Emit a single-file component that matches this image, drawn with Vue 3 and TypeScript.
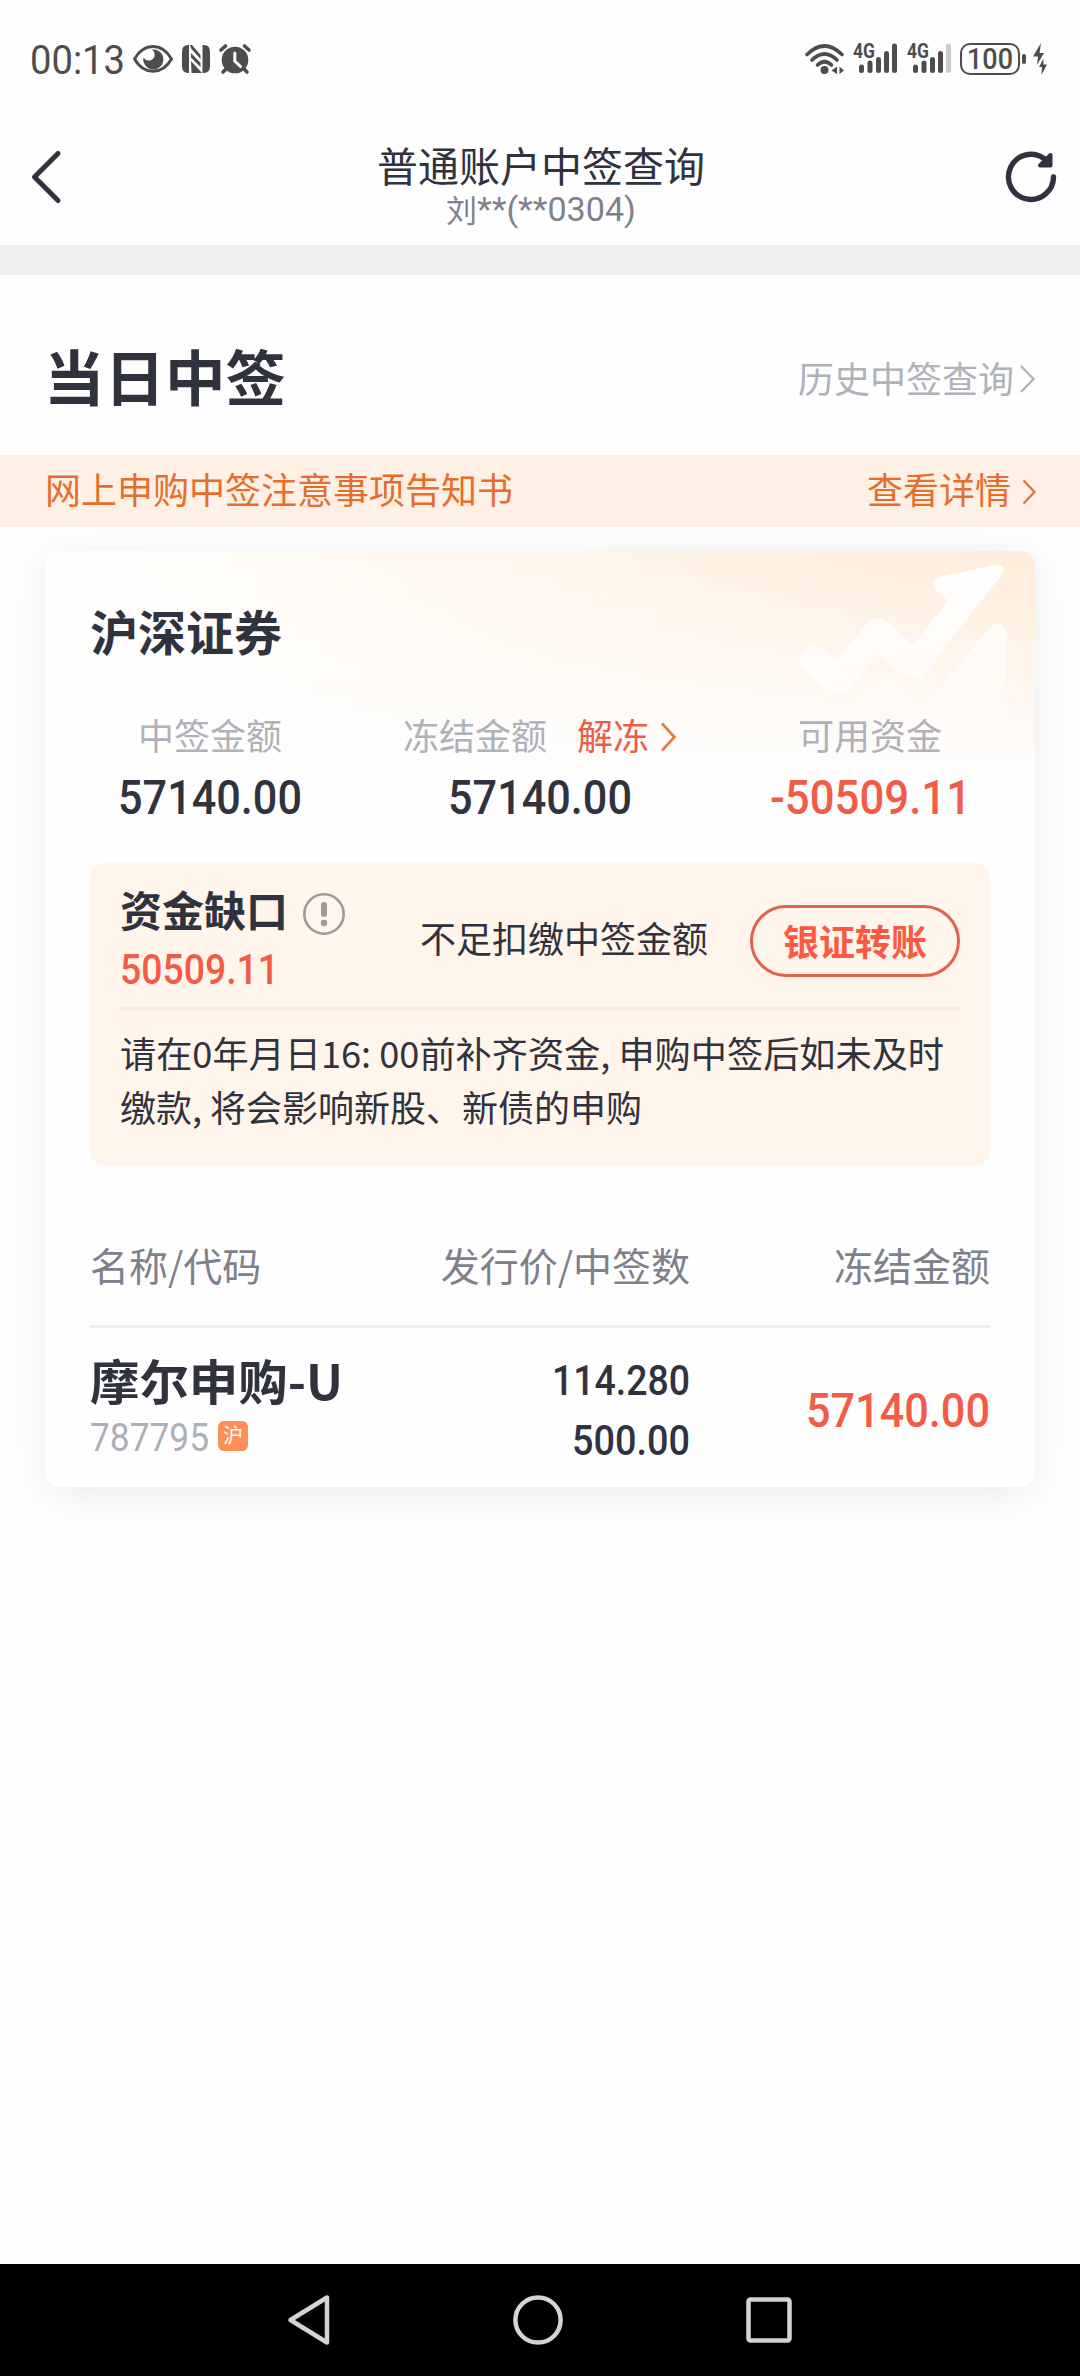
<script setup lang="ts">
import type { Directive } from 'vue'

interface Holding {
  name: string
  nameWidth: number
  code: string
  market: string
  price: string
  count: string
  frozen: string
}

const noticeLines = [
  { text: '请在0年月日16: 00前补齐资金, 申购中签后如未及时', width: 824 },
  { text: '缴款, 将会影响新股、新债的申购', width: 522 },
]

const holdings: Holding[] = [
  {
    name: '摩尔申购-U',
    nameWidth: 253,
    code: '787795',
    market: '沪',
    price: '114.280',
    count: '500.00',
    frozen: '57140.00',
  },
]

// Condenses or widens a run of text to an exact advance width.
const vFit: Directive<HTMLElement, number> = {
  mounted(el, { value }) {
    const natural = el.getBoundingClientRect().width
    if (!natural) return
    el.style.transform = `scaleX(${value / natural})`
    el.style.marginRight = `${value - natural}px`
  },
}
</script>

<template>
  <div class="screen">
    <div class="status">
      <div class="status-left">
        <span v-fit="95" class="fit clock">00:13</span>
        <svg class="ic-eye" width="42" height="30" viewBox="0 0 42 30">
          <path d="M2.5 15C7 7 14 2.5 21 2.5S35 7 39.5 15C35 23 28 27.200 21 27.200S7 23 2.500 15Z" fill="none" stroke="#4d4d4d" stroke-width="3" stroke-linejoin="round" />
          <path d="M20 5.500A10 10 0 1 1 11.500 13.500A6 6 0 1 0 20 5.500Z" fill="#4d4d4d" />
        </svg>
        <svg class="ic-nfc" width="28" height="28" viewBox="0 0 28 28">
          <path d="M6 0H7V28H6Q0 28 0 21V7Q0 0 6 0ZM22 0Q28 0 28 7V21Q28 28 22 28H20.500V0Z" fill="#4d4d4d" />
          <path d="M8 0H10L18.500 10V14L9.500 4ZM9 8L18.500 18V22L9 12.500ZM9 16L20 28H9.500Z" fill="#4d4d4d" />
        </svg>
        <svg class="ic-alarm" width="32" height="30" viewBox="0 0 32 30">
          <circle cx="16" cy="16" r="13.300" fill="#4d4d4d" />
          <path d="M2 6L6.500 2M30 6L25.500 2M7 25L4 28M25 25L28 28" stroke="#4d4d4d" stroke-width="3.600" stroke-linecap="round" />
          <path d="M15.800 9V17L21.500 22.500" fill="none" stroke="#fefefe" stroke-width="3" stroke-linecap="round" />
        </svg>
      </div>
      <div class="status-right">
        <svg width="40" height="32" viewBox="0 0 40 32">
          <g fill="none" stroke="#4d4d4d" stroke-width="3.600" stroke-linecap="round">
            <path d="M2 11.500Q19.500 -5.500 37 11.500" />
            <path d="M7 17Q19.500 5 32 17" />
            <path d="M12.500 22Q19.500 15.500 26.500 22" />
          </g>
          <circle cx="19.500" cy="27" r="4" fill="#4d4d4d" />
          <path d="M26.500 27.500L32 23.500V31ZM39 27.500L34.500 23.500V31Z" fill="#4d4d4d" />
        </svg>
        <svg v-for="n in 2" :key="n" class="ic-signal" width="46" height="32" viewBox="0 0 46 32">
          <text x="0" y="15" font-size="19.500" font-weight="700" textLength="22" lengthAdjust="spacingAndGlyphs" fill="#4d4d4d">4G</text>
          <g stroke="#4d4d4d" stroke-width="5" stroke-linecap="round">
            <path d="M8.500 24V27.500M17 20V27.500M25.500 16.500V27.500M33.500 10.500V27.500" />
            <path :stroke="n === 2 ? '#cccccc' : '#4d4d4d'" d="M41.500 3V27.500" />
          </g>
        </svg>
        <div class="battery"><span v-fit="46" class="fit">100</span></div>
        <i class="nub"></i>
        <svg class="ic-bolt" width="14" height="33" viewBox="0 0 14 33">
          <path d="M8 0L0 13.500H5L4 22L11 10H6.500ZM10.500 15.500L6 24H9L8.500 32L14 21.500H10.500Z" fill="#4d4d4d" />
        </svg>
      </div>
    </div>

    <header class="nav">
      <svg class="back" width="32" height="54" viewBox="0 0 32 54">
        <path d="M28 3.500L4.500 27L28 50.500" fill="none" stroke="#30323d" stroke-width="5" stroke-linecap="round" stroke-linejoin="round" />
      </svg>
      <div class="titles">
        <div class="title">普通账户中签查询</div>
        <div class="subtitle"><span class="cjk">刘</span><span v-fit="159" class="fit">**(**0304)</span></div>
      </div>
      <svg class="refresh" width="54" height="54" viewBox="0 0 54 54">
        <path d="M49.500 27A22.500 22.500 0 1 1 40 8.500" fill="none" stroke="#30323d" stroke-width="5.400" stroke-linecap="round" />
        <path d="M46.500 5V15.500H36Z" fill="#30323d" stroke="#30323d" stroke-width="4" stroke-linejoin="round" />
      </svg>
    </header>
    <div class="gap"></div>

    <section class="heading">
      <h1>当日中签</h1>
      <div class="history">
        历史中签查询
        <svg width="17" height="30" viewBox="0 0 17 30"><path d="M2 2L14.500 15L2 28" fill="none" stroke="#b0b1b9" stroke-width="2.200" /></svg>
      </div>
    </section>

    <div class="banner">
      <span>网上申购中签注意事项告知书</span>
      <span class="detail">
        查看详情
        <svg width="15" height="26" viewBox="0 0 15 26"><path d="M1.500 1.500L12.500 13L1.500 24.500" fill="none" stroke="#e07035" stroke-width="2.200" /></svg>
      </span>
    </div>

    <main class="card">
      <svg class="mark" width="210" height="160" viewBox="0 0 210 160">
        <defs>
          <linearGradient id="line" x1="0" y1="0" x2="0" y2="1">
            <stop offset="0" stop-color="#fff" />
            <stop offset=".3" stop-color="#fff" stop-opacity=".85" />
            <stop offset="1" stop-color="#fff" stop-opacity=".5" />
          </linearGradient>
          <linearGradient id="area" x1="0" y1="0" x2="0" y2="1">
            <stop offset="0" stop-color="#fff" stop-opacity=".75" />
            <stop offset="1" stop-color="#fff" stop-opacity=".15" />
          </linearGradient>
        </defs>
        <path d="M138 12L196 0Q206 0 203 8L126 107Q116 119 103 110L78 88L51 122Q41 134 30 127L4 105Q-5 95 4 86Q13 78 24 84L37 95L64 62Q75 48 89 58L113 80L148 36L136 25Q131 16 138 12Z" fill="url(#line)" />
        <path d="M2 130L20 141Q42 149 55 140L79 116Q85 110 93 116L124 142L188 64Q195 56 202 60Q206 63 206 68V150H2Z" fill="url(#area)" />
      </svg>

      <h2>沪深证券</h2>
      <div class="stats">
        <div class="stat">
          <div class="label">中签金额</div>
          <div class="value"><span v-fit="184" class="fit">57140.00</span></div>
        </div>
        <div class="stat">
          <div class="label">
            冻结金额<span class="unfreeze">解冻</span>
            <svg width="17" height="30" viewBox="0 0 17 30"><path d="M2 1.500L14.500 15L2 28.500" fill="none" stroke="#e07c3c" stroke-width="2.600" /></svg>
          </div>
          <div class="value"><span v-fit="184" class="fit">57140.00</span></div>
        </div>
        <div class="stat">
          <div class="label">可用资金</div>
          <div class="value red"><span v-fit="201" class="fit">-50509.11</span></div>
        </div>
      </div>

      <section class="shortfall">
        <div class="short-top">
          <div class="short-left">
            <div class="short-title">
              资金缺口
              <svg width="42" height="42" viewBox="0 0 42 42">
                <circle cx="21" cy="21" r="19.700" fill="none" stroke="#9d9b98" stroke-width="2.600" />
                <path d="M21 12V21" stroke="#9d9b98" stroke-width="6" stroke-linecap="round" />
                <circle cx="21" cy="30" r="3.200" fill="#9d9b98" />
              </svg>
            </div>
            <div class="short-value"><span v-fit="159" class="fit">50509.11</span></div>
          </div>
          <div class="short-note">不足扣缴中签金额</div>
          <button class="transfer">银证转账</button>
        </div>
        <div class="notice">
          <div v-for="line in noticeLines" :key="line.text"><span v-fit="line.width" class="fit">{{ line.text }}</span></div>
        </div>
      </section>

      <div class="row table-head">
        <div>名称/代码</div>
        <div class="right">发行价/中签数</div>
        <div class="right">冻结金额</div>
      </div>
      <div v-for="h in holdings" :key="h.code" class="row item">
        <div>
          <div class="name"><span v-fit="h.nameWidth" class="fit">{{ h.name }}</span></div>
          <div class="code"><span v-fit="119" class="fit">{{ h.code }}</span><span class="badge">{{ h.market }}</span></div>
        </div>
        <div class="right nums">
          <div><span v-fit="138" class="fit">{{ h.price }}</span></div>
          <div><span v-fit="118" class="fit">{{ h.count }}</span></div>
        </div>
        <div class="right frozen value red"><span v-fit="184" class="fit">{{ h.frozen }}</span></div>
      </div>
    </main>

    <footer class="sysbar">
      <svg width="46" height="54" viewBox="0 0 46 54"><path d="M41 4.500V49.500L4.500 27Z" fill="none" stroke="#d4d4d4" stroke-width="4.500" stroke-linejoin="round" /></svg>
      <svg width="54" height="54" viewBox="0 0 54 54"><circle cx="27" cy="27" r="22.600" fill="none" stroke="#d4d4d4" stroke-width="4.500" /></svg>
      <svg width="50" height="50" viewBox="0 0 50 50"><rect x="4.500" y="4.500" width="41" height="41" rx="2" fill="none" stroke="#d4d4d4" stroke-width="4.500" /></svg>
    </footer>
  </div>
</template>

<style>
body { margin: 0; background: #fefefe; }
</style>

<style scoped>
.screen {
  width: 1080px; height: 2376px; display: flex; flex-direction: column; overflow: hidden;
  background: #fefefe; color: #30323d; font-family: "Noto Sans CJK SC", sans-serif;
}
svg { display: block; flex: none; overflow: visible; }
svg text { font-family: Roboto, sans-serif; }
h1, h2 { margin: 0; }
.fit { display: inline-block; transform-origin: 0 50%; white-space: nowrap; }

.status { height: 120px; display: flex; justify-content: space-between; color: #4d4d4d; font-family: Roboto, sans-serif; }
.status-left, .status-right { display: flex; align-items: center; height: 118px; }
.status-left { padding-left: 30px; }
.clock { font-size: 41px; line-height: 60px; padding-top: 2px; }
.ic-eye { margin-left: 7px; }
.ic-nfc { margin-left: 8px; }
.ic-alarm { margin-left: 9px; }
.status-right { padding-right: 33px; }
.ic-signal { margin-left: 8px; }
.battery {
  box-sizing: border-box; width: 60px; height: 32px; margin-left: 7px; border: 2.500px solid #4d4d4d; border-radius: 10px;
  display: flex; align-items: center; justify-content: center; font-size: 29px; line-height: 28px; font-weight: 500;
}
.nub { width: 4px; height: 10px; margin-left: 2px; border-radius: 2px; background: #4d4d4d; }
.ic-bolt { margin-left: 7px; }

.nav { height: 125px; display: flex; justify-content: space-between; }
.back { margin: 30px 0 0 30px; }
.titles { display: flex; flex-direction: column; align-items: center; padding: 20px 0 0 16px; }
.title { font-size: 41px; line-height: 48px; }
.subtitle { display: flex; font-family: Roboto, sans-serif; font-size: 34px; line-height: 42px; height: 42px; color: #7f818a; }
.cjk { font-family: "Noto Sans CJK SC", sans-serif; font-size: 31px; }
.refresh { margin: 30px 22px 0 0; }
.gap { height: 30px; background: #efefef; }

.heading { height: 180px; display: flex; justify-content: space-between; align-items: center; padding: 0 44px; }
h1 { font-size: 60.500px; line-height: 80px; font-weight: 700; margin-top: 19px; }
.history { display: flex; align-items: center; gap: 5px; font-size: 36px; line-height: 50px; color: #b0b1b9; margin-top: 23px; }
.history svg { margin-top: 4px; }
.banner {
  height: 72px; display: flex; justify-content: space-between; align-items: center; padding: 0 43px 6px 45px;
  box-sizing: border-box; background: #fff0e6; color: #e56e2c; font-size: 36px; line-height: 50px;
}
.detail { display: flex; align-items: center; gap: 11px; }
.detail svg { margin-top: 7px; }

.card {
  position: relative; box-sizing: border-box; height: 936px; margin: 24px 45px 0; padding: 0 45px; border-radius: 15px;
  background:
    linear-gradient(180deg, rgba(254, 254, 254, 0) 0, #fefefe 230px),
    linear-gradient(90deg, #fefefe 0, #fffcf8 20%, #fff5ea 50%, #ffecd9 100%);
  box-shadow: 0 6px 40px rgba(0, 0, 0, .08);
}
.mark { position: absolute; left: 755px; top: 14px; }
h2 { position: relative; font-size: 48px; line-height: 60px; font-weight: 700; padding-top: 49px; }
.stats { position: relative; display: flex; margin: 44px -45px 0; }
.stat { width: 330px; text-align: center; }
.label { display: flex; justify-content: center; align-items: center; height: 60px; font-size: 36px; line-height: 60px; color: #b0b1b9; }
.unfreeze { margin: 0 11px 0 30px; color: #ee5c48; }
.label svg { margin-top: 5px; }
.value { font-family: Roboto, sans-serif; font-size: 49px; line-height: 60px; font-weight: 500; }
.stat .value { margin-top: 4px; }
.red { color: #f25c46; }

.shortfall { box-sizing: border-box; height: 303px; margin-top: 35px; padding: 0 30px; border-radius: 15px; background: #fff5ea; }
.short-top { display: flex; justify-content: space-between; height: 144px; border-bottom: 3px solid #fdebd6; }
.short-left { width: 300px; }
.short-title { display: flex; align-items: center; gap: 15px; height: 60px; padding-top: 16px; font-size: 42px; line-height: 60px; font-weight: 700; }
.short-title svg { margin-top: 9px; }
.short-value { font-family: Roboto, sans-serif; font-size: 42px; line-height: 50px; font-weight: 500; color: #f25c46; margin-top: 6px; }
.short-note { flex: 1; font-size: 36px; line-height: 50px; padding-top: 49px; }
.transfer {
  box-sizing: border-box; width: 210px; height: 72px; margin-top: 42px; padding: 0 0 2px; border: 3px solid #e0634f; border-radius: 36px;
  background: none; color: #f95a41; font: 700 36px/50px "Noto Sans CJK SC", sans-serif;
}
.notice { padding-top: 15px; font-size: 36px; line-height: 54px; }

.row { display: flex; }
.row > div { flex: none; width: 300px; }
.row > .right { text-align: right; }
.table-head { box-sizing: border-box; height: 159px; margin-top: 3px; padding-top: 67px; border-bottom: 3px solid #efeff2; font-size: 39px; line-height: 56px; color: #7f818a; }
.item { height: 159px; }
.name { font-size: 48px; line-height: 60px; font-weight: 700; padding-top: 21px; }
.code { display: flex; align-items: center; margin-top: 7px; font-family: Roboto, sans-serif; font-weight: 400; font-size: 39px; line-height: 44px; color: #adafb8; }
.badge {
  width: 30px; height: 30px; margin: 0 0 5px 9px; border-radius: 6px; background: #ff8f57; color: #fff;
  font: 400 20px/28px "Noto Sans CJK SC", sans-serif; text-align: center;
}
.nums { font-family: Roboto, sans-serif; font-size: 43px; line-height: 60px; font-weight: 500; padding-top: 22px; }
.item .frozen { padding-top: 53px; }

.sysbar { display: flex; align-items: center; justify-content: space-between; height: 112px; margin-top: auto; padding: 0 286px; background: #000; }
</style>
